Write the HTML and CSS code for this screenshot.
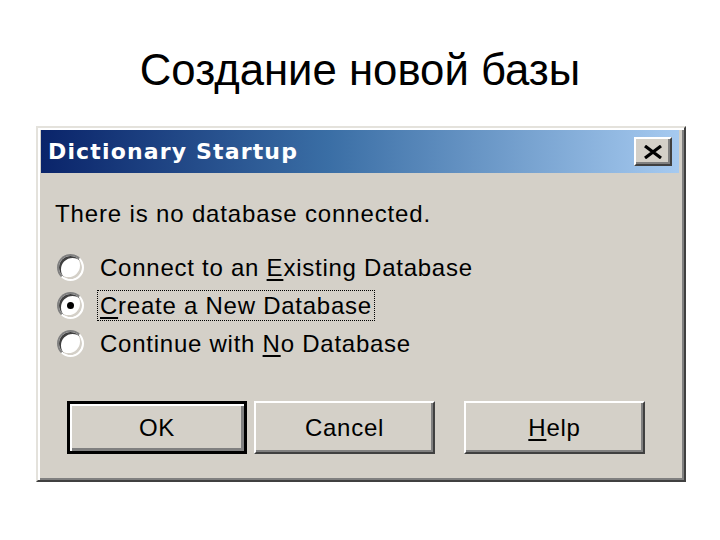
FILE: index.html
```html
<!DOCTYPE html>
<html lang="ru">
<head>
<meta charset="utf-8">
<title>Создание новой базы</title>
<link rel="stylesheet" href="styles.css">
</head>
<body>
<div class="slide">
  <h1 class="slide-title">Создание новой базы</h1>
  <div class="dialog">
    <div class="titlebar">
      <span class="titlebar-text">Dictionary Startup</span>
      <button class="close-btn" type="button" aria-label="Close">
        <svg width="20" height="14" viewBox="0 0 20 14">
          <path d="M2 1 L18 13 M18 1 L2 13" stroke="#000" stroke-width="3.2" fill="none"/>
        </svg>
      </button>
    </div>
    <div class="dialog-body">
      <p class="message">There is no database connected.</p>
      <div class="options">
        <label class="option">
          <span class="radio"></span>
          <span class="option-label">Connect to an <u>E</u>xisting Database</span>
        </label>
        <label class="option">
          <span class="radio checked"></span>
          <span class="option-label focused"><u>C</u>reate a New Database</span>
        </label>
        <label class="option">
          <span class="radio"></span>
          <span class="option-label">Continue with <u>N</u>o Database</span>
        </label>
      </div>
      <div class="buttons">
        <button class="btn default" type="button">OK</button>
        <button class="btn" type="button">Cancel</button>
        <button class="btn help" type="button"><u>H</u>elp</button>
      </div>
    </div>
  </div>
</div>
</body>
</html>
```
FILE: styles.css
```css
html, body {
  margin: 0;
  padding: 0;
  background: #ffffff;
}

.slide {
  width: 720px;
  height: 540px;
  overflow: hidden;
}

.slide-title {
  margin: 0;
  padding-top: 44px;
  height: 52px;
  line-height: 52px;
  font-family: "Liberation Sans", Arial, sans-serif;
  font-weight: normal;
  font-size: 43.7px;
  color: #000;
  text-align: center;
}

.dialog {
  box-sizing: border-box;
  margin: 30px 0 0 36px;
  width: 650px;
  height: 356px;
  background: #d4d0c8;
  border: 2px solid;
  border-color: #e4e2dc #404040 #404040 #e4e2dc;
  box-shadow: inset 2px 2px 0 #ffffff, inset -2px -2px 0 #808080;
  padding: 2px 5px 4px 3px;
  font-family: "Liberation Sans", Arial, sans-serif;
}

.titlebar {
  height: 43px;
  display: flex;
  align-items: center;
  justify-content: space-between;
  padding: 0 7px 0 7px;
  background: linear-gradient(to right, #0a246a 0%, #3a6ea5 45%, #a6caf0 100%);
}

.titlebar-text {
  font-family: "DejaVu Sans", Verdana, sans-serif;
  font-weight: bold;
  font-size: 22px;
  color: #ffffff;
  letter-spacing: 1.15px;
}

.close-btn {
  box-sizing: border-box;
  width: 38px;
  height: 29px;
  padding: 0;
  margin: 0;
  background: #d4d0c8;
  border: 2px solid;
  border-color: #ffffff #404040 #404040 #ffffff;
  box-shadow: inset -2px -2px 0 #808080;
  display: flex;
  align-items: center;
  justify-content: center;
}

.dialog-body {
  padding: 28px 0 0 14px;
  font-size: 24px;
  letter-spacing: 0.75px;
  color: #000;
}

.message {
  margin: 0;
  line-height: 26px;
  letter-spacing: 0.85px;
}

.options {
  margin-top: 27px;
  display: flex;
  flex-direction: column;
  gap: 11px;
}

.option {
  display: flex;
  align-items: center;
  height: 27px;
}

.radio {
  box-sizing: border-box;
  width: 27px;
  height: 27px;
  border-radius: 50%;
  background: #ffffff;
  border: 2px solid;
  border-color: #808080 #ffffff #ffffff #808080;
  box-shadow: inset 2px 2px 0 #404040, inset -2px -2px 0 #d4d0c8;
  margin-left: 2px;
  margin-right: 13px;
  position: relative;
  flex: none;
}

.radio.checked::after {
  content: "";
  position: absolute;
  left: 8px;
  top: 8px;
  width: 7px;
  height: 7px;
  border-radius: 50%;
  background: #000;
}

.option-label {
  line-height: 27px;
  padding: 1px 2px;
  border: 1px dotted transparent;
}

.option-label.focused {
  border-color: #000;
}

.option-label u,
.btn u {
  text-decoration-thickness: 2px;
  text-underline-offset: 3px;
}

.buttons {
  display: flex;
  margin-top: 44px;
  margin-left: 12px;
}

.btn {
  box-sizing: border-box;
  width: 181px;
  height: 53px;
  margin: 0 7px 0 0;
  padding: 0;
  background: #d4d0c8;
  border: 2px solid;
  border-color: #ffffff #404040 #404040 #ffffff;
  box-shadow: inset -2px -2px 0 #808080;
  font-family: "Liberation Sans", Arial, sans-serif;
  font-size: 24px;
  letter-spacing: 0.75px;
  color: #000;
}

.btn.default {
  width: 180px;
  border: 3px solid #000;
  box-shadow: inset 2px 2px 0 #ffffff, inset -3px -3px 0 #808080;
}

.btn.help {
  margin-left: 22px;
}
```
